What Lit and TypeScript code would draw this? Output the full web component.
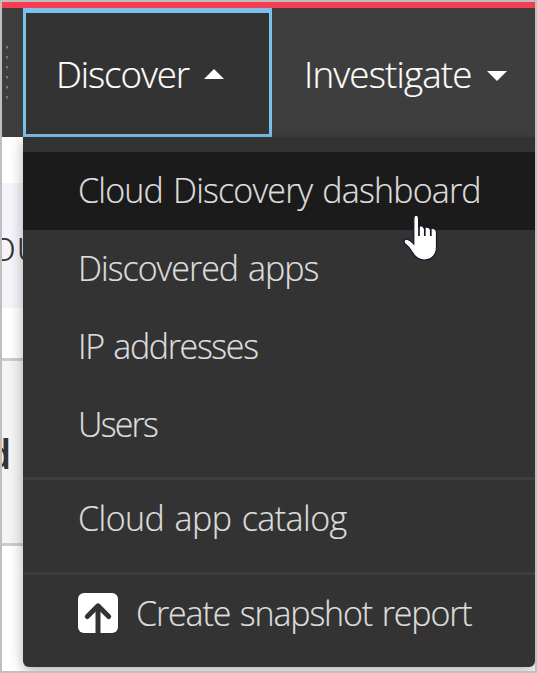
import { LitElement, html, css, svg } from "lit";
import { customElement } from "lit/decorators.js";
import { classMap } from "lit/directives/class-map.js";

interface MenuItem {
  label: string;
  spacing: number;
  active?: boolean;
  icon?: boolean;
}

const groups: MenuItem[][] = [
  [
    { label: "Cloud Discovery dashboard", spacing: -0.82, active: true },
    { label: "Discovered apps", spacing: -1 },
    { label: "IP addresses", spacing: -1.35 },
    { label: "Users", spacing: -1.8 },
  ],
  [{ label: "Cloud app catalog", spacing: -0.55 }],
  [{ label: "Create snapshot report", spacing: -1.15, icon: true }],
];

@customElement("app-root")
export class AppRoot extends LitElement {
  static styles = css`
    :host {
      display: block;
      font-family: "Open Sans", "Noto Sans", sans-serif;
      font-weight: 300;
    }
    .frame {
      position: relative;
      box-sizing: border-box;
      width: 537px;
      height: 673px;
      border: 2px solid #bfbfbf;
      background: #fff;
      overflow: hidden;
      display: flex;
      flex-direction: column;
    }
    .stripe { flex: none; height: 6px; background: #f53e52; }
    .bar { flex: none; height: 129px; display: flex; background: #3e3e3e; }
    .grip { width: 21px; box-sizing: border-box; padding: 38px 0 0 4px; }
    .grip svg { display: block; }
    .tab {
      box-sizing: border-box;
      display: flex;
      align-items: center;
      color: #fff;
      font-size: 36.75px;
      white-space: nowrap;
      -webkit-text-stroke: 0.2px currentColor;
    }
    .tab svg { flex: none; display: block; }
    .open {
      width: 249px;
      background: #333;
      border: 3px solid #7cc0ee;
      border-top-width: 5px;
      padding-left: 30px;
    }
    .open .name { width: 148px; letter-spacing: -1.1px; }
    .closed { padding: 6px 0 0 32px; }
    .closed .name { width: 183px; letter-spacing: -0.83px; margin-top: -3px; }
    .body { flex: 1; display: flex; align-items: flex-start; min-height: 0; }
    .page { width: 21px; height: 534px; overflow: hidden; color: #333; white-space: nowrap; }
    .gap { height: 46px; }
    .heading {
      height: 125px;
      background: #f4f4fa;
      line-height: 124px;
      font-size: 43px;
      text-indent: -11px;
    }
    .space { height: 50px; }
    .card {
      box-sizing: border-box;
      height: 188px;
      border-top: 3px solid #ccc;
      border-bottom: 3px solid #ccc;
      background: #f4f4f4;
      line-height: 185px;
      font-size: 41px;
      font-weight: 600;
      text-indent: -16px;
    }
    .menu {
      position: relative;
      box-sizing: border-box;
      width: 512px;
      height: 530px;
      padding-top: 15px;
      background: #333;
      color: #ddd;
      border-radius: 0 0 6px 6px;
      box-shadow: 0 4px 14px rgba(0, 0, 0, 0.3);
    }
    .group + .group { margin-top: 14px; border-top: 3px solid #3e3e3e; }
    .item {
      box-sizing: border-box;
      height: 77.75px;
      padding: 0 0 1px 55px;
      display: flex;
      align-items: center;
      font-size: 34px;
      word-spacing: 2px;
      white-space: nowrap;
      -webkit-text-stroke: 0.2px currentColor;
    }
    .active { background: #1b1b1b; }
    .icon { flex: none; display: block; margin-right: 18px; }
    .pointer { position: absolute; left: 400px; top: 211px; }
  `;

  render() {
    return html`
      <div class="frame">
        <div class="stripe"></div>
        <div class="bar">
          <div class="grip">
            <svg width="2" height="53">
              <path d="M1 0V53" stroke="#777" stroke-width="2" stroke-dasharray="2.5 7.5" />
            </svg>
          </div>
          <div class="tab open">
            <span class="name">Discover</span>
            <svg width="20" height="10"><path d="M0 10L10 0L20 10Z" fill="#fff" /></svg>
          </div>
          <div class="tab closed">
            <span class="name">Investigate</span>
            <svg width="20" height="10"><path d="M0 0H20L10 10Z" fill="#fff" /></svg>
          </div>
        </div>
        <div class="body">
          <div class="page">
            <div class="gap"></div>
            <div class="heading">ou</div>
            <div class="space"></div>
            <div class="card">d</div>
          </div>
          <div class="menu">
            ${groups.map(
              (items) => html`<div class="group">
                ${items.map(
                  (item) => html`<div class=${classMap({ item: true, active: !!item.active })}>
                    ${item.icon ? this.uploadIcon() : ""}
                    <span style="letter-spacing:${item.spacing}px">${item.label}</span>
                  </div>`
                )}
              </div>`
            )}
          </div>
        </div>
        <svg class="pointer" width="36" height="50" viewBox="0 0 36 50">
          <path
            d="M11.8 31V6.2C11.8 3.6 13 2.2 14.2 2.2S16.6 3.6 16.6 6.2V13.8C17.6 12.4 21 12.4 22 15C23.6 13.6 27 14 28.2 16.3C30 15 34.5 15 34.5 19.5V34C34.5 42 29.5 47 22.5 47C16.5 47 13 44 10.5 39.5C8 35 5.5 32.5 3 30.7C.5 28.2 3 25.5 5.8 26.4C8.5 27.3 10 29 11.8 31Z"
            fill="#fff" stroke="#16152a" stroke-width="1.2" />
          <path d="M17 13V23M22.8 15V23M28.8 16.3V23" stroke="#16152a" stroke-width="1.7" />
        </svg>
      </div>
    `;
  }

  private uploadIcon() {
    return html`<svg class="icon" width="40" height="40" viewBox="0 0 40 40">
      ${svg`<rect width="40" height="40" rx="6" fill="#fff" />
      <path d="M20 40V14" stroke="#333" stroke-width="5" />
      <path d="M9.3 23.5L20 12.8L30.7 23.5" fill="none" stroke="#333" stroke-width="5" stroke-linecap="round" stroke-linejoin="round" />`}
    </svg>`;
  }
}
